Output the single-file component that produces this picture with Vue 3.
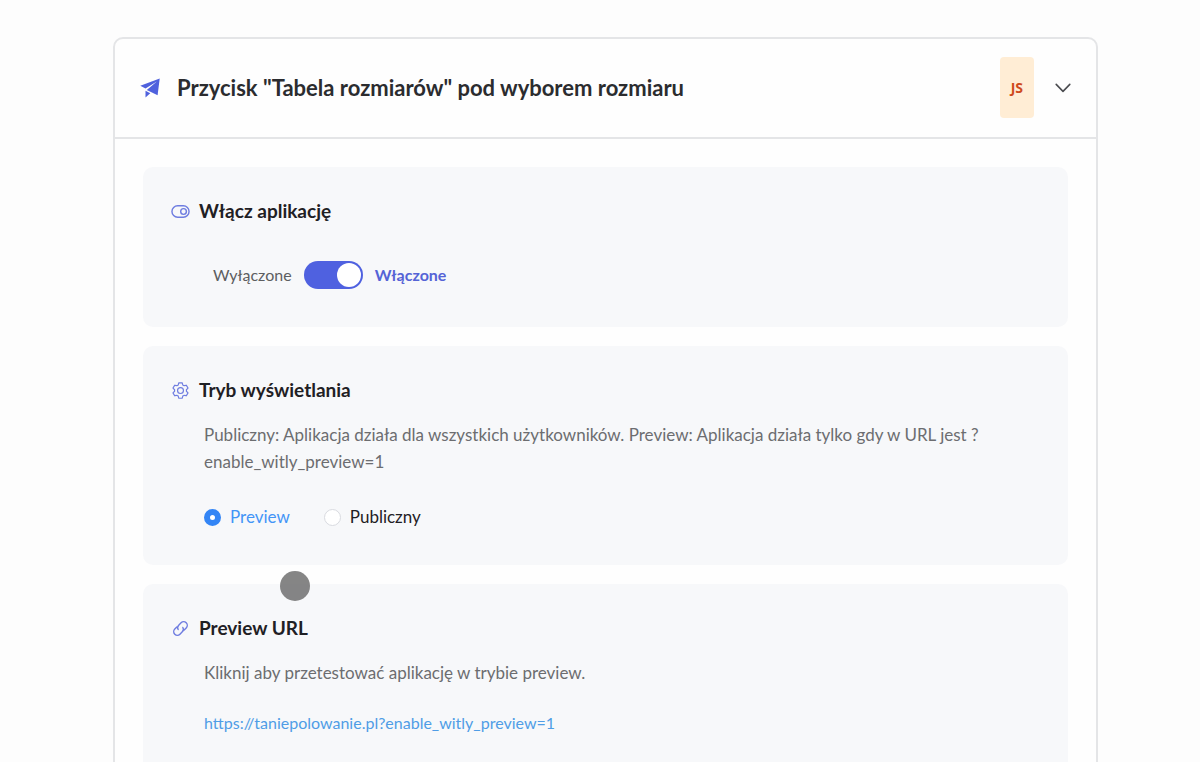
<template>
  <main class="page">
    <article class="app-card">
      <header class="card-header">
        <svg class="plane-icon" viewBox="0 0 20 20" aria-hidden="true">
          <path d="M19.7 0.4 0.3 7.7l5.2 2.9L16.8 3.4 6.8 12l10.8 5.2z" />
          <path d="M5.5 12.8v6.6l4.8-4.2z" />
        </svg>
        <h2 class="card-title">Przycisk "Tabela rozmiarów" pod wyborem rozmiaru</h2>
        <span class="tag">JS</span>
        <button
          type="button"
          class="collapse-btn"
          :aria-expanded="expanded"
          aria-label="Zwiń sekcję"
          @click="expanded = !expanded"
        >
          <svg class="chevron-icon" viewBox="0 0 16 16" aria-hidden="true">
            <polyline points="1.2 4.4 8 11.4 14.8 4.4" />
          </svg>
        </button>
      </header>

      <div v-if="expanded" class="card-body">
        <section class="panel">
          <div class="panel-header">
            <svg class="panel-icon" viewBox="0 0 20 20" aria-hidden="true">
              <rect x="1" y="4" width="18" height="12" rx="6" />
              <circle cx="13.2" cy="10" r="3" />
            </svg>
            <h3 class="panel-title">Włącz aplikację</h3>
          </div>
          <label class="switch-row">
            <span class="switch-text" :class="{ active: !enabled }">Wyłączone</span>
            <input v-model="enabled" type="checkbox" role="switch" class="switch" />
            <span class="switch-text" :class="{ active: enabled }">Włączone</span>
          </label>
        </section>

        <section class="panel">
          <div class="panel-header">
            <svg class="panel-icon" viewBox="0 0 1024 1024" aria-hidden="true">
              <path class="solid" d="M600.704 64a32 32 0 0 1 30.464 22.208l35.2 109.376c14.784 7.232 28.928 15.36 42.432 24.512l112.384-24.192a32 32 0 0 1 34.432 15.36L944.32 364.8a32 32 0 0 1-4.032 37.504l-77.12 85.12a357.12 357.12 0 0 1 0 49.024l77.12 85.248a32 32 0 0 1 4.032 37.504l-88.704 153.6a32 32 0 0 1-34.432 15.296L708.8 803.904c-13.44 9.088-27.648 17.28-42.368 24.512l-35.264 109.376A32 32 0 0 1 600.704 960H423.296a32 32 0 0 1-30.464-22.208L357.696 828.48a351.616 351.616 0 0 1-42.56-24.64l-112.32 24.256a32 32 0 0 1-34.432-15.36L79.68 659.2a32 32 0 0 1 4.032-37.504l77.12-85.248a357.12 357.12 0 0 1 0-48.896l-77.12-85.248A32 32 0 0 1 79.68 364.8l88.704-153.6a32 32 0 0 1 34.432-15.296l112.32 24.256c13.568-9.152 27.776-17.408 42.56-24.64l35.2-109.312A32 32 0 0 1 423.232 64H600.64zm-23.424 64H446.72l-36.352 113.088-24.512 11.968a294.113 294.113 0 0 0-34.816 20.096l-22.656 15.36-116.224-25.088-65.28 113.152 79.68 88.192-1.92 27.136a293.12 293.12 0 0 0 0 40.192l1.92 27.136-79.808 88.192 65.344 113.152 116.224-25.024 22.656 15.296a294.113 294.113 0 0 0 34.816 20.096l24.512 11.968L446.72 896h130.688l36.48-113.152 24.448-11.904a288.282 288.282 0 0 0 34.752-20.096l22.592-15.296 116.288 25.024 65.28-113.152-79.744-88.192 1.92-27.136a293.12 293.12 0 0 0 0-40.256l-1.92-27.136 79.808-88.128-65.344-113.152-116.288 24.96-22.592-15.232a287.616 287.616 0 0 0-34.752-20.096l-24.448-11.904L577.344 128zM512 320a192 192 0 1 1 0 384 192 192 0 0 1 0-384m0 64a128 128 0 1 0 0 256 128 128 0 0 0 0-256" />
            </svg>
            <h3 class="panel-title">Tryb wyświetlania</h3>
          </div>
          <p class="panel-text">
            Publiczny: Aplikacja działa dla wszystkich użytkowników. Preview: Aplikacja działa tylko gdy w URL jest ?<wbr />enable_witly_preview=1
          </p>
          <div class="radio-group" role="radiogroup" aria-label="Tryb wyświetlania">
            <label v-for="option in modes" :key="option.value" class="radio-item">
              <input v-model="mode" type="radio" name="mode" class="radio" :value="option.value" />
              <span class="radio-label">{{ option.label }}</span>
            </label>
          </div>
        </section>

        <section class="panel">
          <div class="panel-header">
            <svg class="panel-icon" viewBox="0 0 24 24" aria-hidden="true">
              <g class="link-shape" transform="rotate(-45 12 12)">
                <path d="M10 7.4H6.4a4.6 4.6 0 0 0 0 9.2h4.2a4.6 4.6 0 0 0 4.4-3.4" />
                <path d="M14 16.6h3.6a4.6 4.6 0 0 0 0-9.2h-4.2A4.6 4.6 0 0 0 9 10.8" />
              </g>
            </svg>
            <h3 class="panel-title">Preview URL</h3>
          </div>
          <p class="panel-text">Kliknij aby przetestować aplikację w trybie preview.</p>
          <a class="preview-link" :href="previewUrl">{{ previewUrl }}</a>
        </section>
      </div>
    </article>

    <span class="pointer" aria-hidden="true"></span>
  </main>
</template>

<script setup>
import { ref } from 'vue'

const expanded = ref(true)
const enabled = ref(true)
const mode = ref('preview')

const modes = [
  { value: 'preview', label: 'Preview' },
  { value: 'public', label: 'Publiczny' }
]

const previewUrl = 'https://taniepolowanie.pl?enable_witly_preview=1'
</script>

<style>
body {
  background: #fdfdfd;
}
</style>

<style scoped>
.page {
  position: relative;
  padding: 37px 102px 37px 113px;
  font-family: Avenir, 'Avenir Next', Lato, sans-serif;
  font-size: 17px;
  color: #1f2024;
}

.app-card {
  border: 2px solid #e4e5e7;
  border-radius: 10px;
  background: #fefefe;
}

.card-header {
  display: flex;
  align-items: center;
  padding: 18px 21px 19px 25px;
  border-bottom: 2px solid #e4e5e7;
}

.plane-icon {
  flex: none;
  width: 20px;
  height: 20px;
  fill: #4f61dd;
}

.card-title {
  flex: 1;
  margin: 0 16px 0 17px;
  font-size: 22px;
  line-height: 28px;
  font-weight: 700;
  color: #2b2c2f;
}

.tag {
  padding: 20px 11px;
  border-radius: 4px;
  background: #ffedd5;
  color: #cf4a1c;
  font-family: 'Open Sans', sans-serif;
  font-size: 14px;
  line-height: 21px;
  font-weight: 700;
}

.collapse-btn {
  display: flex;
  margin-left: 17px;
  padding: 4px;
  border: none;
  background: none;
  color: #4b4c50;
  cursor: pointer;
}

.chevron-icon {
  width: 16px;
  height: 16px;
  fill: none;
  stroke: currentColor;
  stroke-width: 1.6;
  stroke-linecap: round;
  stroke-linejoin: round;
}

.card-body {
  display: flex;
  flex-direction: column;
  gap: 19px;
  padding: 28px;
}

.panel {
  padding: 28px 28px 34px;
  border-radius: 10px;
  background: #f7f8fa;
}

.panel-header {
  display: flex;
  align-items: center;
  gap: 9px;
}

.panel-icon {
  flex: none;
  width: 19px;
  height: 19px;
  fill: none;
  stroke: #6f7de0;
  stroke-width: 1.5;
  stroke-linecap: round;
}

.panel-icon .solid {
  fill: #6f7de0;
  stroke: none;
}

.link-shape {
  stroke-width: 1.8;
}

.panel-title {
  margin: 0;
  font-size: 19px;
  line-height: 32px;
  font-weight: 700;
}

.switch-row {
  display: flex;
  align-items: center;
  gap: 12px;
  width: fit-content;
  margin: 34px 0 4px 42px;
  font-size: 16px;
  line-height: 28px;
}

.switch-text {
  color: #5d5e61;
}

.switch-text.active {
  color: #5563d6;
  font-weight: 700;
}

.switch {
  display: flex;
  align-items: center;
  appearance: none;
  width: 59px;
  height: 28px;
  margin: 0;
  padding: 2px;
  border-radius: 14px;
  background: #c5c8d0;
  cursor: pointer;
}

.switch::before {
  content: '';
  width: 24px;
  height: 24px;
  border-radius: 50%;
  background: #fff;
}

.switch:checked {
  justify-content: flex-end;
  background: #4f61e0;
}

.panel-text {
  margin: 15px 0 0 33px;
  line-height: 27px;
  color: #6c6d70;
}

.radio-group {
  display: flex;
  gap: 34px;
  margin: 28px 0 0 33px;
}

.radio-item {
  display: flex;
  align-items: center;
  gap: 9px;
  line-height: 28px;
  cursor: pointer;
}

.radio {
  appearance: none;
  width: 17px;
  height: 17px;
  margin: 0;
  border: 1px solid #d9dbe0;
  border-radius: 50%;
  background: #fff;
}

.radio:checked {
  border: 6px solid #3385f5;
}

.radio:checked + .radio-label {
  color: #4395f7;
}

.preview-link {
  display: inline-block;
  margin: 23px 0 0 33px;
  font-size: 16px;
  line-height: 28px;
  color: #4f9de6;
  text-decoration: none;
}

.pointer {
  position: absolute;
  top: 571px;
  left: 280px;
  width: 30px;
  height: 30px;
  border-radius: 50%;
  background: rgba(112, 112, 112, 0.85);
  pointer-events: none;
}
</style>
